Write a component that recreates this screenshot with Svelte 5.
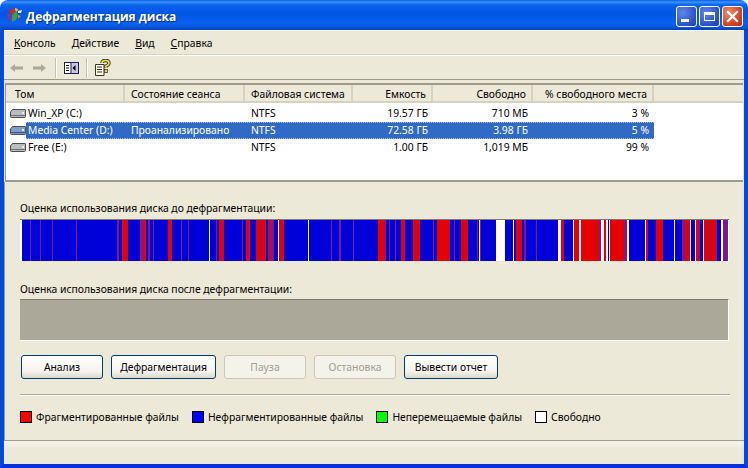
<script>
	const columns = [
		{ label: 'Том', width: 119 },
		{ label: 'Состояние сеанса', width: 120 },
		{ label: 'Файловая система', width: 108 },
		{ label: 'Емкость', width: 80, right: true },
		{ label: 'Свободно', width: 100, right: true },
		{ label: '% свободного места', width: 121, right: true }
	];

	const rows = [
		{ name: 'Win_XP (C:)', state: '', fs: 'NTFS', size: '19.57 ГБ', free: '710 МБ', pct: '3 %' },
		{ name: 'Media Center (D:)', state: 'Проанализировано', fs: 'NTFS', size: '72.58 ГБ', free: '3.98 ГБ', pct: '5 %', selected: true },
		{ name: 'Free (E:)', state: '', fs: 'NTFS', size: '1.00 ГБ', free: '1,019 МБ', pct: '99 %' }
	];

	const colors = { r: '#e60000', b: '#0000d8', p: '#7a1a8c', w: '#ffffff' };

	// start x, end x, kind of every stretch that is not plain blue
	const marks = [
		[20, 22, 'w'], [30, 31, 'p'], [40, 41, 'p'], [52, 53, 'p'], [76, 77, 'p'], [117, 119, 'p'],
		[122, 128, 'r'], [140, 143, 'p'], [143, 146, 'r'], [148, 150, 'p'], [153, 154, 'p'], [168, 172, 'r'],
		[181, 182, 'p'], [188, 189, 'p'], [209, 210, 'w'], [216, 217, 'p'], [219, 224, 'r'], [242, 243, 'p'],
		[246, 250, 'r'], [256, 261, 'r'], [261, 262, 'p'], [262, 266, 'r'], [268, 270, 'p'], [270, 272, 'r'],
		[272, 274, 'p'], [278, 279, 'w'], [279, 284, 'r'], [308, 309, 'w'], [331, 332, 'p'], [339, 341, 'p'],
		[353, 354, 'p'], [378, 385, 'r'], [385, 386, 'p'], [389, 390, 'p'], [395, 396, 'p'], [401, 405, 'r'],
		[413, 420, 'r'], [433, 434, 'p'], [437, 450, 'r'], [454, 455, 'p'], [461, 468, 'r'], [477, 478, 'p'],
		[479, 480, 'w'], [480, 481, 'p'], [496, 505, 'w'], [513, 514, 'w'], [516, 522, 'r'], [524, 526, 'p'],
		[536, 537, 'p'], [558, 561, 'w'], [561, 564, 'r'], [573, 574, 'w'], [574, 579, 'r'], [579, 581, 'w'],
		[581, 599, 'r'], [599, 601, 'p'], [601, 604, 'w'], [604, 606, 'r'], [606, 608, 'w'], [609, 610, 'w'],
		[610, 624, 'r'], [624, 627, 'p'], [627, 629, 'w'], [645, 646, 'w'], [646, 648, 'r'], [656, 663, 'r'],
		[674, 675, 'w'], [682, 685, 'p'], [685, 690, 'r'], [690, 691, 'w'], [695, 696, 'w'], [696, 699, 'r'],
		[699, 700, 'p'], [703, 704, 'w'], [704, 708, 'r'], [708, 709, 'p'], [709, 716, 'r'], [716, 717, 'p'],
		[721, 723, 'w'], [723, 728, 'p'], [728, 729, 'w']
	];

	const segments = [];
	let x = 20;
	for (const [from, to, kind] of marks) {
		if (from > x) segments.push({ width: from - x, color: colors.b });
		segments.push({ width: to - from, color: colors[kind] });
		x = to;
	}

	const legend = [
		{ label: 'Фрагментированные файлы', color: '#ff0000' },
		{ label: 'Нефрагментированные файлы', color: '#0000ff' },
		{ label: 'Неперемещаемые файлы', color: '#00ff00' },
		{ label: 'Свободно', color: '#ffffff' }
	];
</script>

<div class="window">
	<header class="titlebar">
		<svg class="app-icon" width="16" height="17" viewBox="0 0 16 17">
			<path d="M3 4 L8 1 L10 4 L6 8 Z" fill="#d92020" />
			<path d="M1 5 L5 8 L6 15 L2 12 Z" fill="#8a2bb0" />
			<path d="M6 8 L10 4 L12 8 L10 13 L6 15 Z" fill="#2ea83a" />
			<path d="M9 1 L12 2 L11 5 L9 3 Z" fill="#f2c21e" />
			<path d="M12 4 L16 3 L15 6 L12 6 Z" fill="#ffffff" />
			<path d="M12 8 L15 9 L12 12 Z" fill="#f07a1a" />
		</svg>
		<span class="title">Дефрагментация диска</span>
		<div class="caption-buttons">
			<div class="cap min"><span></span></div>
			<div class="cap max"><span></span></div>
			<div class="cap close">
				<svg width="13" height="13" viewBox="0 0 13 13">
					<path d="M2 2 L11 11 M11 2 L2 11" stroke="#fff" stroke-width="2.2" stroke-linecap="square" />
				</svg>
			</div>
		</div>
	</header>

	<div class="client">
		<nav class="menubar">
			<span><u>К</u>онсоль</span>
			<span><u>Д</u>ействие</span>
			<span><u>В</u>ид</span>
			<span><u>С</u>правка</span>
		</nav>

		<div class="toolbar">
			<svg class="tool" width="16" height="16" viewBox="0 0 16 16">
				<path d="M2 8 L7 4 V6.5 H15 V9.5 H7 V12 Z" fill="#aca899" />
			</svg>
			<svg class="tool next" width="16" height="16" viewBox="0 0 16 16">
				<path d="M14 8 L9 4 V6.5 H1 V9.5 H9 V12 Z" fill="#aca899" />
			</svg>
			<i class="tool-sep"></i>
			<svg class="tool" width="15" height="16" viewBox="0 0 15 16">
				<rect x="0.5" y="2.5" width="14" height="11" fill="#fff" stroke="#1b1b6e" />
				<rect x="7" y="3" width="7" height="10" fill="#c8c8e6" />
				<path d="M2 5.5h3M2 8h3M2 10.5h3" stroke="#000" />
				<path d="M7 3 V13" stroke="#1b1b6e" />
				<path d="M11.5 5 V11 L8.5 8 Z" fill="#000" />
			</svg>
			<i class="tool-sep"></i>
			<svg class="tool" width="16" height="17" viewBox="0 0 16 17">
				<path d="M0.5 5.5 H9 V16.5 H0.5 Z" fill="#fffbe6" stroke="#333" />
				<path d="M2 8h5M2 10.5h5M2 13h5" stroke="#333" />
				<path d="M7 4 Q7 1.5 10.5 1.5 Q14 1.5 14 4 Q14 6 11 7 V9" fill="none" stroke="#333" stroke-width="3.4" />
				<path d="M7 4 Q7 1.5 10.5 1.5 Q14 1.5 14 4 Q14 6 11 7 V9" fill="none" stroke="#f6e23a" stroke-width="1.6" />
				<rect x="9.5" y="10.5" width="3" height="3" fill="#f6e23a" stroke="#333" stroke-width="0.8" />
			</svg>
		</div>

		<div class="list">
			<div class="list-head">
				{#each columns as col, i}
					<div class="th" class:right={col.right} class:first={i === 0} style="width: {col.width}px">{col.label}</div>
				{/each}
			</div>
			<div class="list-body">
				{#each rows as row}
					<div class="row">
						<div class="cell name" style="width: {columns[0].width}px">
							<svg class="drive" width="16" height="9" viewBox="0 0 16 9">
								<path d="M2.5 .5 H15 Q15.5 .5 15.5 1 V7.5 Q15.5 8.5 14.5 8.5 H1.5 Q.5 8.5 .5 7.5 V3 Z" fill={row.selected ? '#7f9ccb' : '#b8bcc0'} stroke="#4c4f52" />
								<path d="M1 6.5 H15" stroke={row.selected ? '#35558f' : '#6d7174'} />
								<rect x="12" y="3" width="2" height="2" fill="#eaeef2" />
							</svg>
							<span class="name-text" class:sel={row.selected}>{row.name}</span>
						</div>
						<div class="row-rest" class:sel={row.selected}>
							<div class="cell" style="width: {columns[1].width}px">{row.state}</div>
							<div class="cell" style="width: {columns[2].width}px">{row.fs}</div>
							<div class="cell right" style="width: {columns[3].width}px">{row.size}</div>
							<div class="cell right" style="width: {columns[4].width}px">{row.free}</div>
							<div class="cell right" style="width: {columns[5].width}px">{row.pct}</div>
						</div>
					</div>
				{/each}
			</div>
		</div>

		<div class="pane">
			<div class="caption">Оценка использования диска до дефрагментации:</div>
			<div class="bar">
				{#each segments as seg}
					<i style="width: {seg.width}px; background: {seg.color}"></i>
				{/each}
			</div>
			<div class="caption after">Оценка использования диска после дефрагментации:</div>
			<div class="bar empty"></div>

			<div class="buttons">
				<button class="w82">Анализ</button>
				<button class="w105">Дефрагментация</button>
				<button class="w82" disabled>Пауза</button>
				<button class="w82" disabled>Остановка</button>
				<button class="w94">Вывести отчет</button>
			</div>

			<div class="legend">
				{#each legend as item}
					<div class="legend-item">
						<i class="swatch" style="background: {item.color}"></i>
						<span>{item.label}</span>
					</div>
				{/each}
			</div>
		</div>

		<div class="statusbar"></div>
	</div>
</div>

<style>
	:global(body) {
		margin: 0;
		background: #fff;
	}
	.window {
		width: 748px;
		height: 468px;
		display: flex;
		flex-direction: column;
		font-family: 'Noto Sans', sans-serif;
		font-size: 10.35px;
		color: #000;
		overflow: hidden;
	}
	.titlebar {
		height: 30px;
		flex: none;
		display: flex;
		align-items: center;
		padding: 0 5px 0 6px;
		border-radius: 8px 8px 0 0;
		background: linear-gradient(#0a5ae0 0, #3a93ff 2px, #0a62ec 5px, #0055e5 14px, #0a62f0 24px, #0a4fd0 28px, #0142b8 30px);
	}
	.app-icon {
		flex: none;
	}
	.title {
		margin: 3px 0 0 4px;
		font: bold 12px 'Open Sans', sans-serif;
		color: #fff;
		text-shadow: 1px 1px 0 #0a2f96;
	}
	.caption-buttons {
		margin: 3px 0 0 auto;
		display: flex;
		gap: 2px;
	}
	.cap {
		width: 21px;
		height: 21px;
		box-sizing: border-box;
		border: 1px solid #fff;
		border-radius: 3px;
		background: radial-gradient(circle at 30% 30%, #5f86e8, #2a50c8 70%, #1d3fae);
		position: relative;
		display: flex;
		align-items: center;
		justify-content: center;
	}
	.cap.close {
		background: radial-gradient(circle at 30% 30%, #e88e70, #d0431f 65%, #b0300f);
	}
	.cap.min span {
		position: absolute;
		left: 4px;
		bottom: 4px;
		width: 8px;
		height: 3px;
		background: #fff;
	}
	.cap.max span {
		width: 11px;
		height: 9px;
		box-sizing: border-box;
		border: 1px solid #fff;
		border-top-width: 3px;
	}
	.client {
		flex: 1;
		min-height: 0;
		display: flex;
		flex-direction: column;
		background: #ece9d8;
		border: 4px solid #0349dd;
		border-top: 0;
		border-bottom-color: #0831d9;
	}
	.menubar {
		height: 25px;
		flex: none;
		display: flex;
		align-items: center;
		gap: 16px;
		padding-left: 10px;
		border-top: 1px solid #fff;
		box-sizing: border-box;
		border-bottom: 1px solid #d8d4c4;
	}
	.toolbar {
		height: 25px;
		flex: none;
		display: flex;
		align-items: center;
		padding-left: 4px;
		gap: 7px;
		border-top: 1px solid #fff;
		border-bottom: 1px solid #9d9a8c;
		box-sizing: border-box;
	}
	.tool.next {
		margin-left: 1px;
	}
	.tool-sep {
		width: 1px;
		height: 20px;
		background: #c5c2b2;
		border-right: 1px solid #fff;
	}
	.list {
		height: 99px;
		flex: none;
		margin: 3px 0 0 1px;
		width: 738px;
		box-sizing: border-box;
		background: #fff;
		border-left: 1px solid #9d9a8c;
		border-top: 2px solid #9d9a8c;
		border-bottom: 2px solid #9d9a8c;
	}
	.list-head {
		height: 18px;
		display: flex;
		background: #ece9d8;
		border-bottom: 2px solid #d6d2c2;
		box-sizing: border-box;
	}
	.th {
		flex: none;
		box-sizing: border-box;
		padding: 1px 5px 0 6px;
		border-right: 2px solid #d6d2c2;
		line-height: 16px;
		white-space: nowrap;
	}
	.th.first {
		padding-left: 9px;
	}
	.list-body {
		padding-top: 2px;
	}
	.row {
		height: 17px;
		display: flex;
		line-height: 17px;
	}
	.cell {
		flex: none;
		box-sizing: border-box;
		padding: 0 5px 0 6px;
		white-space: nowrap;
	}
	.right {
		text-align: right;
	}
	.name {
		display: flex;
		align-items: center;
		padding: 0 0 0 4px;
		gap: 0;
	}
	.name-text {
		padding: 0 2px;
		height: 17px;
		box-sizing: border-box;
	}
	.drive {
		flex: none;
	}
	.sel {
		background: #316ac5;
		color: #fff;
		height: 17px;
		box-sizing: border-box;
		line-height: 15px;
		border-top: 1px dotted #a8bde0;
		border-bottom: 1px dotted #a8bde0;
	}
	.name .sel {
		flex: 1;
	}
	.row-rest {
		display: flex;
	}
	.pane {
		flex: 1;
		min-height: 0;
		display: flex;
		flex-direction: column;
		padding: 19px 15px 0 15px;
		border-left: 1px solid #9d9a8c;
		border-bottom: 1px solid #9d9a8c;
	}
	.caption {
		line-height: 14px;
		height: 18px;
	}
	.caption.after {
		margin-top: 21px;
		height: 17px;
	}
	.bar {
		height: 42px;
		flex: none;
		display: flex;
		background: #fff;
		box-shadow: inset 0 1px 0 #7c7a6e;
		width: 709px;
		position: relative;
	}
	.bar i {
		flex: none;
		height: 41px;
		margin-top: 1px;
		display: block;
	}
	.bar.empty {
		background: #aca899;
		border-top: 1px solid #7c7a6e;
		border-right: 1px solid #fff;
		border-bottom: 1px solid #fff;
		box-sizing: border-box;
		box-shadow: none;
	}
	.buttons {
		display: flex;
		gap: 8px;
		margin: 14px 0 0 1px;
	}
	button {
		height: 24px;
		box-sizing: border-box;
		padding: 0;
		font: inherit;
		color: #000;
		border: 1px solid #003c74;
		border-radius: 3px;
		background: linear-gradient(#fff 0, #f4f3ee 70%, #dcd7c8 100%);
	}
	button:disabled {
		color: #a19e8e;
		border-color: #cac8bb;
		background: #f4f3ea;
	}
	.w82 {
		width: 82px;
	}
	.w105 {
		width: 105px;
	}
	.w94 {
		width: 94px;
	}
	.legend {
		margin-top: 15px;
		border-top: 1px solid #aca899;
		box-shadow: inset 0 1px 0 #fff;
		display: flex;
		gap: 13px;
		padding-top: 15px;
		width: 710px;
	}
	.legend-item {
		display: flex;
		align-items: center;
		gap: 4px;
		line-height: 14px;
	}
	.swatch {
		width: 12px;
		height: 12px;
		box-sizing: border-box;
		border: 1px solid #000;
		display: block;
	}
	.statusbar {
		height: 23px;
		flex: none;
		background: linear-gradient(#f6f4ea, #ece9d8 8px);
		box-sizing: border-box;
	}
</style>
